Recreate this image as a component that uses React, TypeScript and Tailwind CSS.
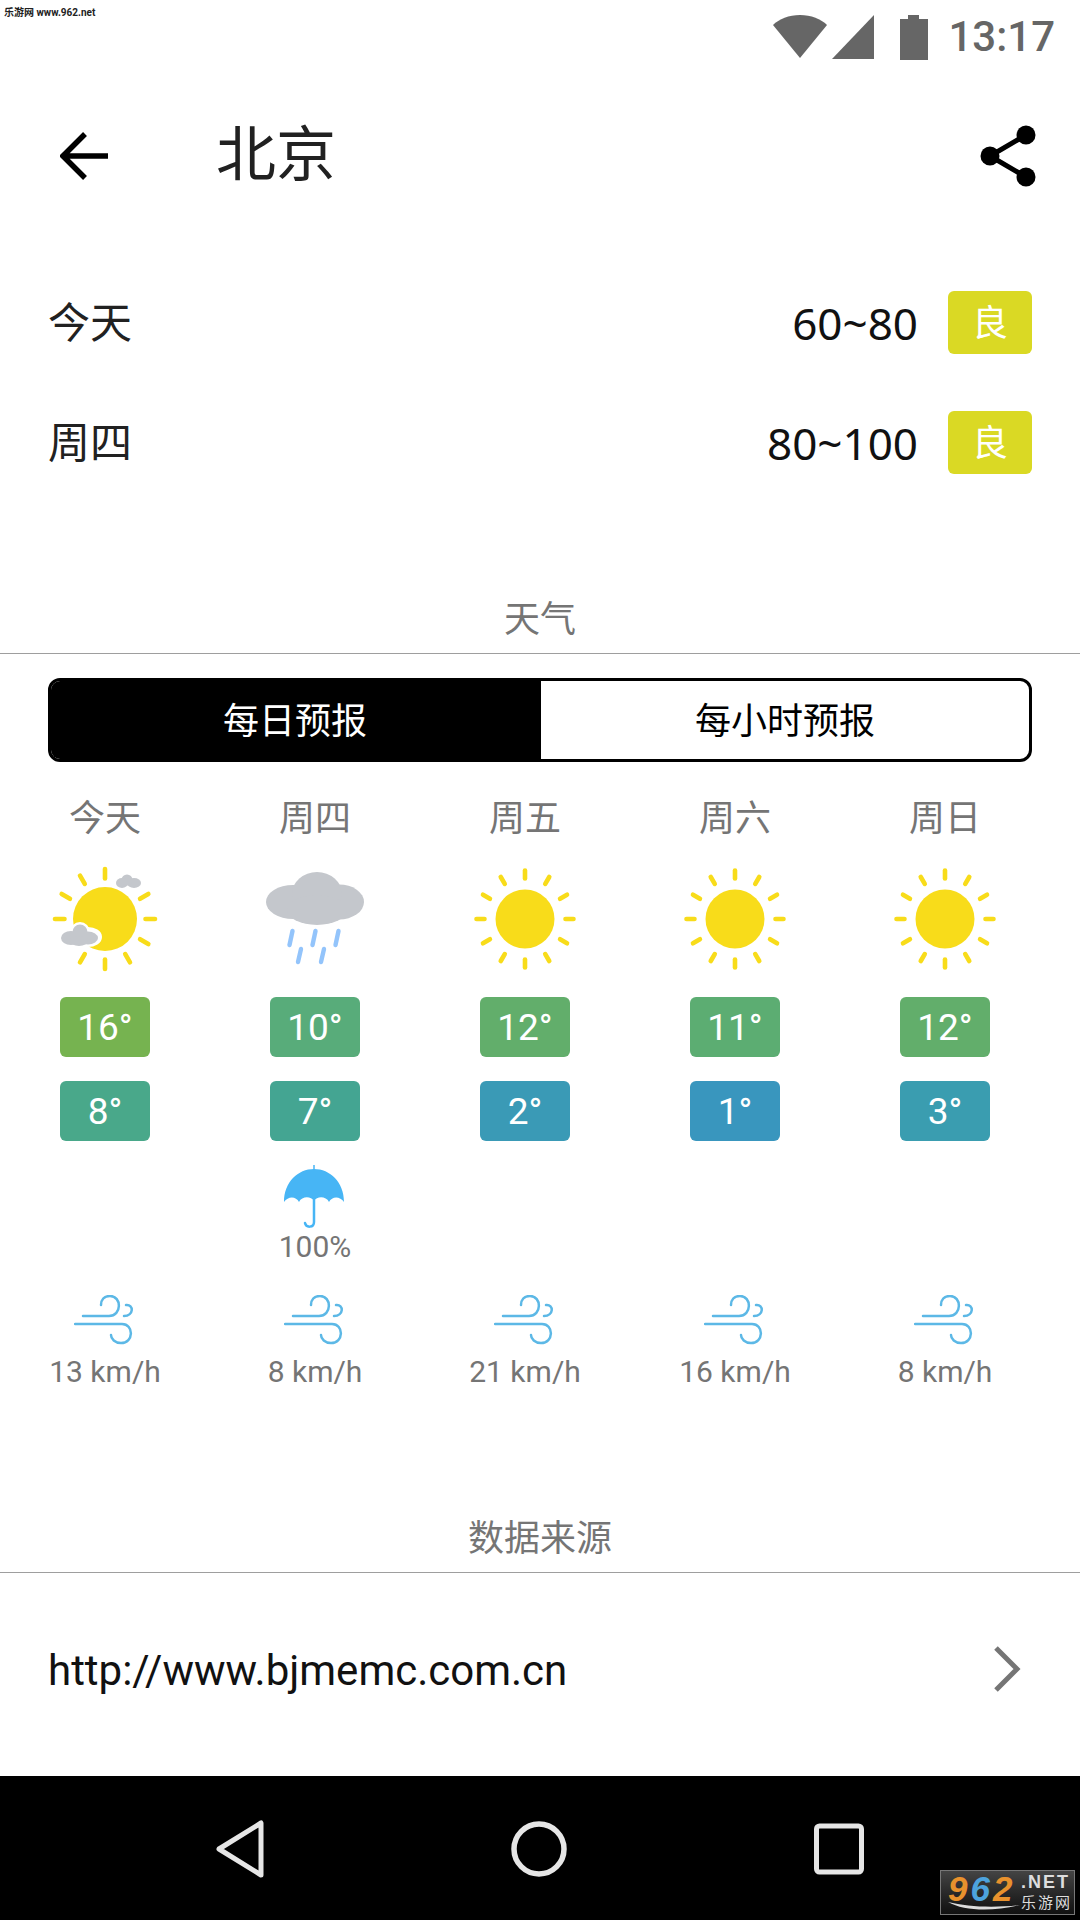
import React from "react";

const cjk = "font-['Roboto','Noto_Sans_CJK_SC',sans-serif]";

const days = [
  { name: "今天", icon: "partly", high: "16°", highBg: "bg-[#76b350]", low: "8°", lowBg: "bg-[#49a88a]", wind: "13 km/h" },
  { name: "周四", icon: "rain", high: "10°", highBg: "bg-[#58ac7a]", low: "7°", lowBg: "bg-[#44a592]", wind: "8 km/h", rain: "100%" },
  { name: "周五", icon: "sun", high: "12°", highBg: "bg-[#62ae6b]", low: "2°", lowBg: "bg-[#3a9ab6]", wind: "21 km/h" },
  { name: "周六", icon: "sun", high: "11°", highBg: "bg-[#5cad72]", low: "1°", lowBg: "bg-[#3996be]", wind: "16 km/h" },
  { name: "周日", icon: "sun", high: "12°", highBg: "bg-[#62ae6b]", low: "3°", lowBg: "bg-[#3a9db0]", wind: "8 km/h" },
];

const Rays = ({ skip = [], outer = 6.5 }: { skip?: number[]; outer?: number }) => (
  <g stroke="#f8dc1a" strokeWidth="4.6" strokeLinecap="round">
    {[0, 30, 60, 90, 120, 150, 180, 210, 240, 270, 300, 330]
      .filter((a) => !skip.includes(a))
      .map((a) => (
        <line key={a} x1={55} y1={14.5} x2={55} y2={outer} transform={`rotate(${a} 55 55)`} />
      ))}
  </g>
);

const SunIcon = () => (
  <svg width="110" height="110" viewBox="0 0 110 110">
    <Rays />
    <circle cx="55" cy="55" r="29.5" fill="#f8dc1a" />
  </svg>
);

const PartlyIcon = () => (
  <svg width="110" height="110" viewBox="0 0 110 110">
    <Rays skip={[30, 240]} outer={5} />
    <circle cx="55" cy="55" r="32" fill="#f8dc1a" />
    <g fill="#fff" stroke="#fff" strokeWidth="6">
      <ellipse cx="23" cy="74" rx="12" ry="7" />
      <ellipse cx="38" cy="73" rx="11" ry="7" />
      <circle cx="30" cy="68" r="7" />
    </g>
    <g fill="#c4c7cc">
      <ellipse cx="21" cy="74" rx="10" ry="7" />
      <ellipse cx="38" cy="74" rx="10" ry="6.5" />
      <circle cx="30" cy="68" r="7.5" />
      <ellipse cx="29" cy="77" rx="9" ry="5" />
    </g>
    <g fill="#c4c7cc">
      <ellipse cx="72" cy="19" rx="6" ry="5" />
      <ellipse cx="84" cy="19" rx="7" ry="5" />
      <circle cx="77" cy="16" r="5.5" />
    </g>
  </svg>
);

const RainIcon = () => (
  <svg width="110" height="110" viewBox="0 0 110 110">
    <g fill="#c4c7cc">
      <ellipse cx="33" cy="38" rx="27" ry="17" />
      <ellipse cx="79" cy="38" rx="25" ry="17.5" />
      <ellipse cx="57" cy="30" rx="25" ry="22" />
      <ellipse cx="57" cy="46" rx="30" ry="15" />
    </g>
    <g stroke="#93c4fb" strokeWidth="4.4" strokeLinecap="round">
      <line x1="32.5" y1="67" x2="29.5" y2="81" />
      <line x1="55.5" y1="67" x2="52.5" y2="81" />
      <line x1="78.5" y1="67" x2="75.5" y2="81" />
      <line x1="41" y1="85" x2="38" y2="98" />
      <line x1="64" y1="85" x2="61" y2="98" />
    </g>
  </svg>
);

const UmbrellaIcon = () => (
  <svg width="64" height="64" viewBox="0 0 64 64" className="ml-[-2px] block">
    <line x1="32" y1="0" x2="32" y2="6" stroke="#47b5f5" strokeWidth="1.5" />
    <path
      d="M2 37 C2 17 16 4 32 4 C48 4 62 17 62 37 C58 31 50 31 47 37 C44 31 35 31 32 36 C29 31 20 31 17 37 C14 31 6 31 2 37 Z"
      fill="#47b5f5"
    />
    <path d="M32 34 V57 C32 63 24 63 23 58" fill="none" stroke="#47b5f5" strokeWidth="2.5" strokeLinecap="round" />
  </svg>
);

const WindIcon = () => (
  <svg width="62" height="50" viewBox="0 0 62 50" className="block">
    <g fill="none" stroke="#5cb8e6" strokeWidth="2.5" strokeLinecap="round">
      <path d="M9 21 H35 C48 21 48 1 36 1 C30 1 27 5 27 10" />
      <path d="M1 29 H48 C60 29 60 48 47 48 C41 48 37 44 37 40" />
      <path d="M52 10 C60 9 60 21 50 21" />
    </g>
  </svg>
);

const icons: Record<string, React.ReactNode> = {
  sun: <SunIcon />,
  partly: <PartlyIcon />,
  rain: <RainIcon />,
};

const SectionTitle = ({ title }: { title: string }) => (
  <div className="flex h-[60px] items-start justify-center border-b border-[#9e9e9e] pt-[2px] text-[36px] leading-[48px] text-[#757575]">
    {title}
  </div>
);

const App = () => {
  return (
    <div className={`relative flex h-[1920px] w-[1080px] flex-col overflow-hidden bg-white ${cjk}`}>
      {/* status bar */}
      <div className="relative flex h-[74px] items-center justify-end pr-[25px]">
        <div className="absolute left-[4px] top-[6px] text-[10px] leading-[14px] font-bold text-[#222]">乐游网 www.962.net</div>
        <svg width="54" height="44" viewBox="0 0 54 44">
          <path d="M27 43 L0 10 C6 4 16 0 27 0 C38 0 48 4 54 10 Z" fill="#666" />
        </svg>
        <svg width="42" height="44" viewBox="0 0 42 44" className="ml-[5px]">
          <path d="M42 0 V44 H0 Z" fill="#666" />
        </svg>
        <svg width="30" height="45" viewBox="0 0 30 45" className="ml-[25px]">
          <path d="M9 0 H20 V4 H29 V45 H1 V4 H9 Z" fill="#666" />
        </svg>
        <span className="ml-[19px] font-['Roboto'] text-[42px] leading-none font-medium text-[#666]">13:17</span>
      </div>

      {/* toolbar */}
      <div className="flex h-[166px] items-center pb-[2px] pl-[60px] pr-[44px]">
        <svg width="50" height="48" viewBox="0 0 50 48">
          <path d="M48 24 H5 M25 2 L3 24 L25 46" fill="none" stroke="#000" strokeWidth="5.5" />
        </svg>
        <h1 className="ml-[106px] flex-1 text-[60px] leading-none text-[#212121]">北京</h1>
        <svg width="56" height="62" viewBox="0 0 56 62">
          <g fill="#000">
            <circle cx="46" cy="10" r="9.5" />
            <circle cx="10" cy="31" r="9.5" />
            <circle cx="46" cy="52" r="9.5" />
          </g>
          <path d="M46 10 L10 31 L46 52" fill="none" stroke="#000" strokeWidth="5" />
        </svg>
      </div>

      {/* air quality */}
      <div className="flex h-[354px] flex-col pt-[22px]">
        {[
          { label: "今天", range: "60~80" },
          { label: "周四", range: "80~100" },
        ].map((row) => (
          <div key={row.label} className="flex h-[120px] shrink-0 items-center px-[48px]">
            <span className="flex-1 pt-[3px] text-[42px] leading-none text-[#212121]">{row.label}</span>
            <span className="pt-[1px] font-['Noto_Sans'] text-[44px] leading-none text-[#111]">{row.range}</span>
            <span className="ml-[30px] flex h-[63px] w-[84px] items-center justify-center rounded-[6px] bg-[#dad924] pt-[3px] text-[36px] text-white">良</span>
          </div>
        ))}
      </div>

      <SectionTitle title="天气" />

      {/* forecast */}
      <div className="px-[48px] pt-[24px]">
        <div className="flex h-[84px] overflow-hidden rounded-[12px] border-[3px] border-black text-[36px]">
          <div className="flex w-[488px] items-center justify-center bg-black pt-[3px] text-white">每日预报</div>
          <div className="flex flex-1 items-center justify-center border-l-[2px] border-black pt-[3px] text-black">每小时预报</div>
        </div>
      </div>

      <div className="grid w-[1050px] grid-cols-5 pt-[33px]">
        {days.map((d) => (
          <div key={d.name} className="flex flex-col items-center">
            <div className="h-[48px] text-[36px] leading-[48px] text-[#757575]">{d.name}</div>
            <div className="mt-[21px] h-[110px]">{icons[d.icon]}</div>
            <div className={`mt-[23px] flex h-[60px] w-[90px] items-center justify-center rounded-[6px] pt-[1px] font-['Roboto'] text-[37px] text-white ${d.highBg}`}>{d.high}</div>
            <div className={`mt-[24px] flex h-[60px] w-[90px] items-center justify-center rounded-[6px] pt-[1px] font-['Roboto'] text-[37px] text-white ${d.lowBg}`}>{d.low}</div>
            <div className="flex h-[124px] flex-col items-center pt-[24px]">
              {d.rain && (
                <>
                  <UmbrellaIcon />
                  <span className="font-['Roboto'] text-[30px] leading-[36px] text-[#757575]">{d.rain}</span>
                </>
              )}
            </div>
            <div className="mt-[30px]">
              <WindIcon />
            </div>
            <span className="mt-[9px] font-['Roboto'] text-[30px] leading-[36px] text-[#757575]">{d.wind}</span>
          </div>
        ))}
      </div>

      <div className="mt-[123px]">
        <SectionTitle title="数据来源" />
      </div>

      <div className="flex h-[203px] items-center justify-between pb-[8px] pl-[48px] pr-[58px]">
        <span className="font-['Roboto'] text-[42px] leading-none text-[#111]">http://www.bjmemc.com.cn</span>
        <svg width="30" height="48" viewBox="0 0 30 48" className="mt-[-3px]">
          <path d="M4 3 L25 24 L4 45" fill="none" stroke="#757575" strokeWidth="5" />
        </svg>
      </div>

      {/* nav bar */}
      <div className="relative flex flex-1 items-center gap-[247px] bg-black pl-[216px] pt-[2px]">
        <svg width="48" height="58" viewBox="0 0 48 58">
          <path d="M45 3 V55 L3 29 Z" fill="none" stroke="#e6e6e6" strokeWidth="5" strokeLinejoin="round" />
        </svg>
        <svg width="56" height="56" viewBox="0 0 56 56">
          <circle cx="28" cy="28" r="25" fill="none" stroke="#e6e6e6" strokeWidth="5.5" />
        </svg>
        <svg width="50" height="52" viewBox="0 0 50 52">
          <rect x="2.5" y="3" width="45" height="46" rx="3" fill="none" stroke="#e6e6e6" strokeWidth="5" />
        </svg>
        <div className="absolute bottom-[5px] left-[940px] flex h-[45px] w-[135px] items-start border border-[#777] bg-gradient-to-b from-[#444] to-[#111] pl-[7px]">
          <div className="flex w-[73px] flex-col">
            <span className="font-['Liberation_Sans'] text-[35px] leading-none font-bold italic tracking-[3px]">
              <span className="text-[#e8912d]">9</span>
              <span className="text-[#4da3dd]">6</span>
              <span className="text-[#e8912d]">2</span>
            </span>
            <svg width="72" height="10" viewBox="0 0 72 10" className="mt-[-4px]">
              <path d="M0 0 C16 9 44 10 72 3 C46 6 20 5 0 0 Z" fill="#ddd" />
            </svg>
          </div>
          <div className="flex flex-col items-start text-[#ddd]">
            <span className="font-['Liberation_Sans'] text-[18px] leading-[23px] font-bold tracking-[2px]">.NET</span>
            <span className="text-[15px] leading-[18px] tracking-[2px]">乐游网</span>
          </div>
        </div>
      </div>
    </div>
  );
};

export default App;
